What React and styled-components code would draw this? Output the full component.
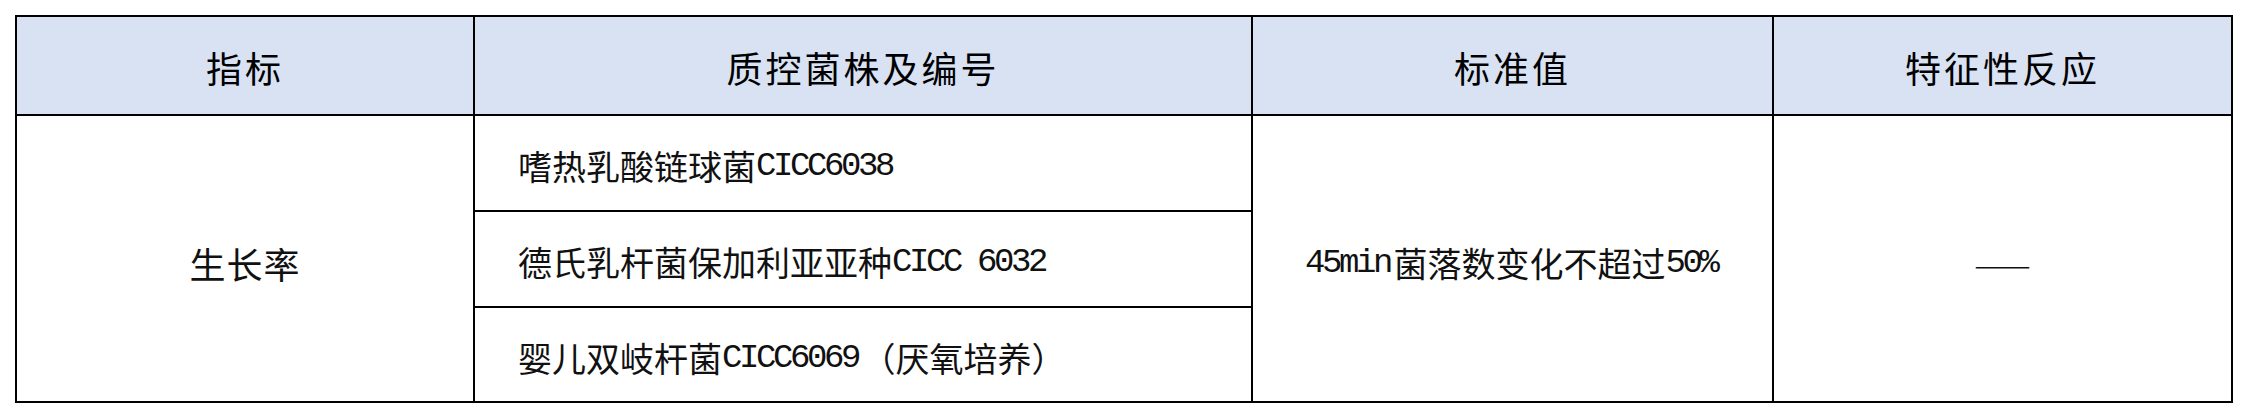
import React from "react";
import styled, { createGlobalStyle } from "styled-components";

const GlobalStyle = createGlobalStyle`
  html, body {
    margin: 0;
    padding: 0;
    background: #ffffff;
  }
  body {
    font-family: "Noto Sans CJK SC", "Noto Sans", sans-serif;
    color: #000000;
  }
`;

const Table = styled.div`
  display: grid;
  width: max-content;
  grid-template-columns: 456px 776px 519px 457px;
  grid-template-rows: 97px 94px 94px 93px;
  gap: 2px;
  padding: 2px;
  background: #000000;
  margin: 15px 0 0 15px;
`;

const HeadCell = styled.div`
  display: flex;
  align-items: center;
  justify-content: center;
  background: #d9e2f3;
  font-family: "Noto Sans CJK SC", sans-serif;
  font-size: 36px;
  font-weight: 400;
  letter-spacing: 3px;
  line-height: 1;
  padding-top: 2px;
  color: #000000;
`;

const BodyCell = styled.div`
  display: flex;
  align-items: center;
  justify-content: ${(p) => (p.$left ? "flex-start" : "center")};
  padding-left: ${(p) => (p.$left ? "43px" : "0")};
  padding-top: ${(p) => (p.$left ? "6px" : "8px")};
  background: #ffffff;
  grid-row: ${(p) => (p.$rows ? `span ${p.$rows}` : "auto")};
  font-family: "Noto Sans CJK SC", sans-serif;
  font-size: ${(p) => (p.$strong ? "36px" : "34px")};
  font-weight: 400;
  letter-spacing: ${(p) => (p.$strong ? "1px" : "0")};
  line-height: 1;
  white-space: nowrap;
  color: #111111;
`;

const Latin = styled.span`
  font-family: "Liberation Mono", "DejaVu Sans Mono", monospace;
  letter-spacing: -0.1em;
  margin-right: 0.1em;
`;

const Dash = styled.span`
  font-family: "Noto Sans CJK SC", sans-serif;
  font-weight: 300;
  letter-spacing: 0;
`;

function Mixed({ text }) {
  const parts = text.split(/([\x20-\x7e]+)/).filter((s) => s.length > 0);
  return parts.map((part, i) =>
    /^[\x20-\x7e]+$/.test(part) ? (
      <Latin key={i}>{part.replace(/ /g, "\u00a0")}</Latin>
    ) : (
      <React.Fragment key={i}>{part}</React.Fragment>
    )
  );
}

const headers = ["指标", "质控菌株及编号", "标准值", "特征性反应"];
const strains = [
  "嗜热乳酸链球菌CICC6038",
  "德氏乳杆菌保加利亚亚种CICC 6032",
  "婴儿双岐杆菌CICC6069（厌氧培养）",
];

export default function App() {
  return (
    <>
      <GlobalStyle />
      <Table>
        {headers.map((h) => (
          <HeadCell key={h}>{h}</HeadCell>
        ))}
        <BodyCell $rows={3} $strong>
          生长率
        </BodyCell>
        <BodyCell $left>
          <Mixed text={strains[0]} />
        </BodyCell>
        <BodyCell $rows={3}>
          <Mixed text="45min菌落数变化不超过50%" />
        </BodyCell>
        <BodyCell $rows={3}>
          <Dash>——</Dash>
        </BodyCell>
        <BodyCell $left>
          <Mixed text={strains[1]} />
        </BodyCell>
        <BodyCell $left>
          <Mixed text={strains[2]} />
        </BodyCell>
      </Table>
    </>
  );
}
